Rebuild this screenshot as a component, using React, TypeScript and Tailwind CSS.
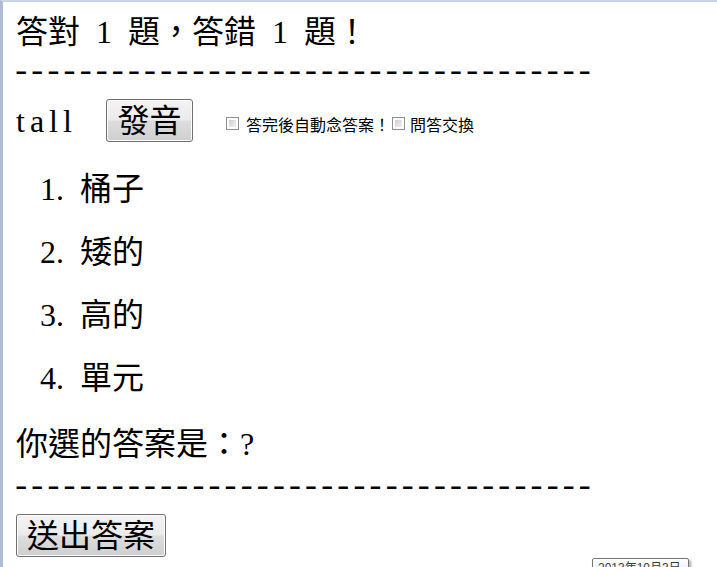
import React from 'react'

const DASHES = '-'.repeat(36)

const OPTIONS = ['桶子', '矮的', '高的', '單元']

function WinButton({ label, className }: { label: string; className: string }) {
  return (
    <button
      type="button"
      className={`flex items-center justify-center rounded-[3px] border border-[#707070] bg-[linear-gradient(to_bottom,#f3f3f3_0%,#ebebeb_48%,#dddddd_52%,#cfcfcf_100%)] text-[32px] leading-none text-black shadow-[inset_0_0_0_1px_#fcfcfc] ${className}`}
    >
      {label}
    </button>
  )
}

function CheckBox() {
  return (
    <span className="inline-block size-[13px] border border-[#8e8f8f] bg-white p-[2px]">
      <span className="block size-full bg-[linear-gradient(135deg,#cfcfcf_0%,#f1f1f1_100%)]" />
    </span>
  )
}

function DashLine({ className }: { className: string }) {
  return (
    <div
      className={`-ml-[5px] flex items-center font-['Liberation_Mono',monospace] text-[34px] leading-none tracking-[-4.3px] whitespace-nowrap ${className}`}
    >
      {DASHES}
    </div>
  )
}

export default function App() {
  return (
    <div className="relative h-[567px] w-[717px] overflow-hidden border-t-2 border-l-[3px] border-t-[#c9d7e8] border-l-[#aebdd0] bg-white pl-[13px] font-['Liberation_Serif','Noto_Sans_CJK_TC',serif] text-black">
      {/* Score */}
      <div className="mt-[10px] flex h-[40px] items-center text-[32px] leading-none [word-spacing:8px]">
        答對 1 題，答錯 1 題！
      </div>

      <DashLine className="h-[42px]" />

      {/* Word + speak button + options */}
      <div className="flex h-[53px] items-center">
        <span className="w-[90px] text-[32px] leading-none tracking-[5px]">tall</span>
        <WinButton label="發音" className="h-[43px] w-[87px]" />
        <label className="ml-[33px] flex items-center pt-[6px] font-['Noto_Sans_CJK_TC',sans-serif] text-[16px] leading-none">
          <CheckBox />
          <span className="ml-[7px]">答完後自動念答案！</span>
        </label>
        <label className="ml-[2px] flex items-center pt-[6px] font-['Noto_Sans_CJK_TC',sans-serif] text-[16px] leading-none">
          <CheckBox />
          <span className="ml-[5px]">問答交換</span>
        </label>
      </div>

      {/* Choices */}
      <ol className="pt-[10px]">
        {OPTIONS.map((opt, i) => (
          <li key={opt} className="flex h-[63px] items-center text-[32px] leading-none">
            <span className="ml-[24px] w-[40px]">{i + 1}.</span>
            <span>{opt}</span>
          </li>
        ))}
      </ol>

      <div className="mt-[15px] flex h-[40px] items-center text-[32px] leading-none">
        你選的答案是：?
      </div>

      <DashLine className="h-[48px]" />

      <WinButton label="送出答案" className="mt-[2px] h-[43px] w-[150px]" />

      {/* Date tooltip */}
      <div className="absolute top-[556px] left-[589px] h-[20px] w-[97px] rounded-[2px] border border-[#767676] bg-[linear-gradient(to_bottom,#ffffff,#e4e5f0)] pl-[5px] font-['Liberation_Sans','Noto_Sans_CJK_TC',sans-serif] text-[12px] leading-[18px] text-[#3c3c3c] shadow-[2px_2px_3px_rgba(0,0,0,0.35)]">
        2013年10月3日
      </div>
    </div>
  )
}
